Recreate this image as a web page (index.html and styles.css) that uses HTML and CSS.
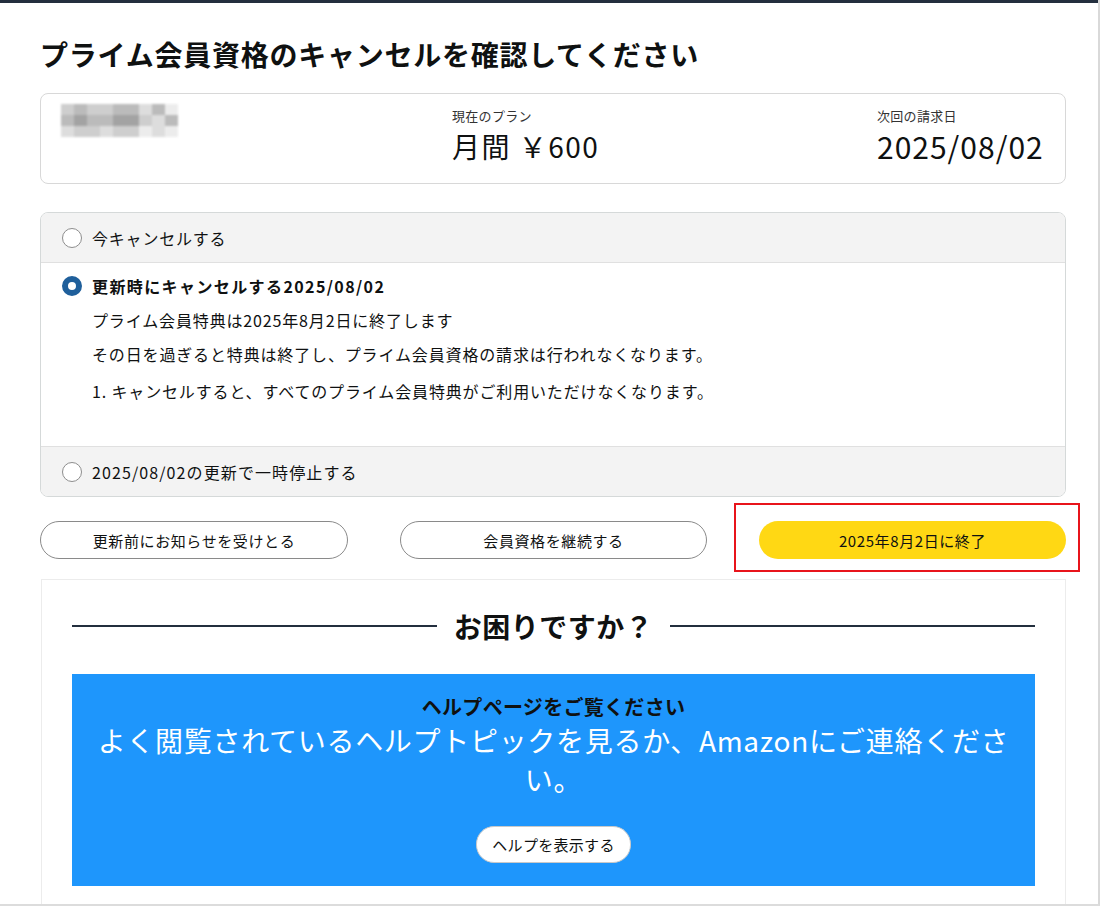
FILE: index.html
```html
<!DOCTYPE html>
<html lang="ja">
<head>
<meta charset="utf-8">
<link rel="stylesheet" href="styles.css">
</head>
<body>
<div class="frame">
  <div class="topbar"></div>
  <main class="page">
    <h1 class="title">プライム会員資格のキャンセルを確認してください</h1>

    <section class="summary">
      <div class="name-blur">
        <span class="px g3"></span><span class="px g2"></span><span class="px g3"></span><span class="px g3"></span><span class="px g2"></span><span class="px g2"></span><span class="px g4"></span><span class="px g2"></span><span class="px g5"></span>
        <span class="px g2"></span><span class="px g1"></span><span class="px g2"></span><span class="px g2"></span><span class="px g1"></span><span class="px g1"></span><span class="px g3"></span><span class="px g4"></span><span class="px g2"></span>
        <span class="px g4"></span><span class="px g3"></span><span class="px g3"></span><span class="px g4"></span><span class="px g3"></span><span class="px g3"></span><span class="px g5"></span><span class="px g4"></span><span class="px g5"></span>
      </div>
      <div class="stat">
        <div class="stat-label">現在のプラン</div>
        <div class="stat-value">月間 ￥600</div>
      </div>
      <div class="stat">
        <div class="stat-label">次回の請求日</div>
        <div class="stat-value big">2025/08/02</div>
      </div>
    </section>

    <section class="options">
      <div class="opt opt-grey">
        <span class="radio"></span>
        <span class="opt-text">今キャンセルする</span>
      </div>
      <div class="opt opt-open">
        <div class="opt-head">
          <span class="radio checked"></span>
          <span class="opt-text bold">更新時にキャンセルする2025/08/02</span>
        </div>
        <p class="detail">プライム会員特典は2025年8月2日に終了します</p>
        <p class="detail">その日を過ぎると特典は終了し、プライム会員資格の請求は行われなくなります。</p>
        <p class="detail list">1. キャンセルすると、すべてのプライム会員特典がご利用いただけなくなります。</p>
      </div>
      <div class="opt opt-grey">
        <span class="radio"></span>
        <span class="opt-text wide">2025/08/02の更新で一時停止する</span>
      </div>
    </section>

    <section class="actions">
      <button class="btn outline">更新前にお知らせを受けとる</button>
      <button class="btn outline">会員資格を継続する</button>
      <div class="btn-wrap">
        <button class="btn primary">2025年8月2日に終了</button>
        <span class="highlight"></span>
      </div>
    </section>

    <section class="help">
      <div class="help-heading">
        <span class="rule"></span>
        <h2>お困りですか？</h2>
        <span class="rule"></span>
      </div>
      <div class="help-box">
        <h3>ヘルプページをご覧ください</h3>
        <p class="help-text">よく閲覧されているヘルプトピックを見るか、Amazonにご連絡ください。</p>
        <button class="help-btn">ヘルプを表示する</button>
      </div>
    </section>
  </main>
</div>
</body>
</html>
```

FILE: styles.css
```css
* { box-sizing: border-box; }

html, body {
  margin: 0;
  padding: 0;
  background: #ffffff;
}

body {
  font-family: "Noto Sans CJK JP", "Noto Sans", "Liberation Sans", sans-serif;
  color: #0f1111;
}

.frame {
  width: 1100px;
  height: 906px;
  overflow: hidden;
  border-right: 2px solid #d9d9d9;
  border-bottom: 2px solid #dcdcdc;
}

.topbar {
  height: 3px;
  background: #232f3e;
}

.page {
  padding: 0 32px 0 40px;
}

.title {
  margin: 0;
  padding-top: 33px;
  height: 90px;
  font-size: 28px;
  line-height: 36px;
  font-weight: 700;
  letter-spacing: 0.75px;
  color: #0f1111;
}

/* summary card */
.summary {
  height: 91px;
  border: 1px solid #d8d8d8;
  border-radius: 8px;
  display: grid;
  grid-template-columns: 391px 425px auto;
  padding: 10px 0 0 20px;
}

.name-blur {
  display: grid;
  grid-template-columns: repeat(9, 13px);
  grid-template-rows: repeat(3, 11px);
  width: 120px;
  filter: blur(1.2px);
  opacity: 0.9;
}

.px { display: block; }
.g1 { background: #9a9a9a; }
.g2 { background: #b4b4b4; }
.g3 { background: #c9c9c9; }
.g4 { background: #dadada; }
.g5 { background: #ebebeb; }

.stat-label {
  font-size: 13px;
  line-height: 18px;
  color: #333;
  margin-top: 3px;
  letter-spacing: 0.3px;
}

.stat-value {
  font-size: 28px;
  line-height: 36px;
  margin-top: 3px;
  letter-spacing: 1.5px;
}

.stat-value.big {
  font-size: 30px;
  letter-spacing: 1px;
}

/* options */
.options {
  margin-top: 28px;
  border: 1px solid #d5d9d9;
  border-radius: 8px;
  overflow: hidden;
}

.opt {
  display: flex;
  align-items: center;
  gap: 10px;
  padding: 0 0 0 21px;
}

.opt-grey {
  height: 50px;
  background: #f3f3f3;
}

.opt-grey:first-child {
  border-bottom: 1px solid #e0e0e0;
}

.opt-grey:last-child {
  border-top: 1px solid #e0e0e0;
}

.opt-open {
  display: block;
  height: 183px;
  padding-top: 11px;
}

.opt-head {
  display: flex;
  align-items: center;
  gap: 10px;
  height: 24px;
}

.radio {
  width: 20px;
  height: 20px;
  border-radius: 50%;
  border: 1px solid #8d8d8d;
  background: #fff;
  flex: none;
}

.radio.checked {
  border: 6px solid #1f5f9b;
}

.opt-text {
  font-size: 16px;
  line-height: 24px;
  color: #0f1111;
  letter-spacing: 0.8px;
}

.opt-text.wide {
  letter-spacing: 1.1px;
}

.opt-text.bold {
  font-weight: 700;
  letter-spacing: 1.4px;
}

.detail {
  margin: 0;
  padding-left: 30px;
  font-size: 16px;
  line-height: 24px;
  margin-top: 10px;
  color: #0f1111;
  letter-spacing: 0.85px;
}

.detail.list {
  margin-top: 13px;
}

/* actions */
.actions {
  margin-top: 24px;
  display: grid;
  grid-template-columns: 308px 307px 307px;
  column-gap: 52px;
}

.btn {
  height: 38px;
  border-radius: 19px;
  font-family: inherit;
  font-size: 15px;
  letter-spacing: 0.6px;
  color: #0f1111;
  cursor: pointer;
}

.btn.outline {
  background: #fff;
  border: 1px solid #8a8a8a;
}

.btn-wrap {
  position: relative;
  display: flex;
}

.btn.primary {
  flex: 1;
  background: #ffd814;
  border: none;
}

.highlight {
  position: absolute;
  left: -25px;
  right: -14px;
  top: -18px;
  bottom: -13px;
  border: 2px solid #e8141b;
  pointer-events: none;
}

/* help */
.help {
  margin-top: 20px;
  margin-left: 1px;
  width: 1025px;
  border: 1px solid #ececec;
  border-bottom: none;
  height: 340px;
  padding: 0 30px;
}

.help-heading {
  display: flex;
  align-items: center;
  gap: 17px;
  height: 94px;
  padding-bottom: 2px;
}

.rule {
  flex: 1;
  height: 2px;
  background: #232f3e;
}

.help-heading h2 {
  margin: 0;
  font-size: 28px;
  line-height: 36px;
  font-weight: 700;
  letter-spacing: 0.5px;
  color: #0f1111;
}

.help-box {
  height: 212px;
  background: #1e96fc;
  text-align: center;
  padding: 19px 18px 0;
}

.help-box h3 {
  margin: 0;
  font-size: 20px;
  line-height: 28px;
  font-weight: 700;
  letter-spacing: 0.3px;
  color: #0f1111;
}

.help-text {
  margin: 0;
  font-size: 28px;
  line-height: 39px;
  color: #ffffff;
  letter-spacing: 0.7px;
  padding: 0 4px;
}

.help-btn {
  margin-top: 27px;
  width: 155px;
  height: 37px;
  border-radius: 18px;
  background: #fff;
  border: 1px solid #c9c9c9;
  font-family: inherit;
  font-size: 15px;
  letter-spacing: 0.3px;
  color: #0f1111;
}
```
